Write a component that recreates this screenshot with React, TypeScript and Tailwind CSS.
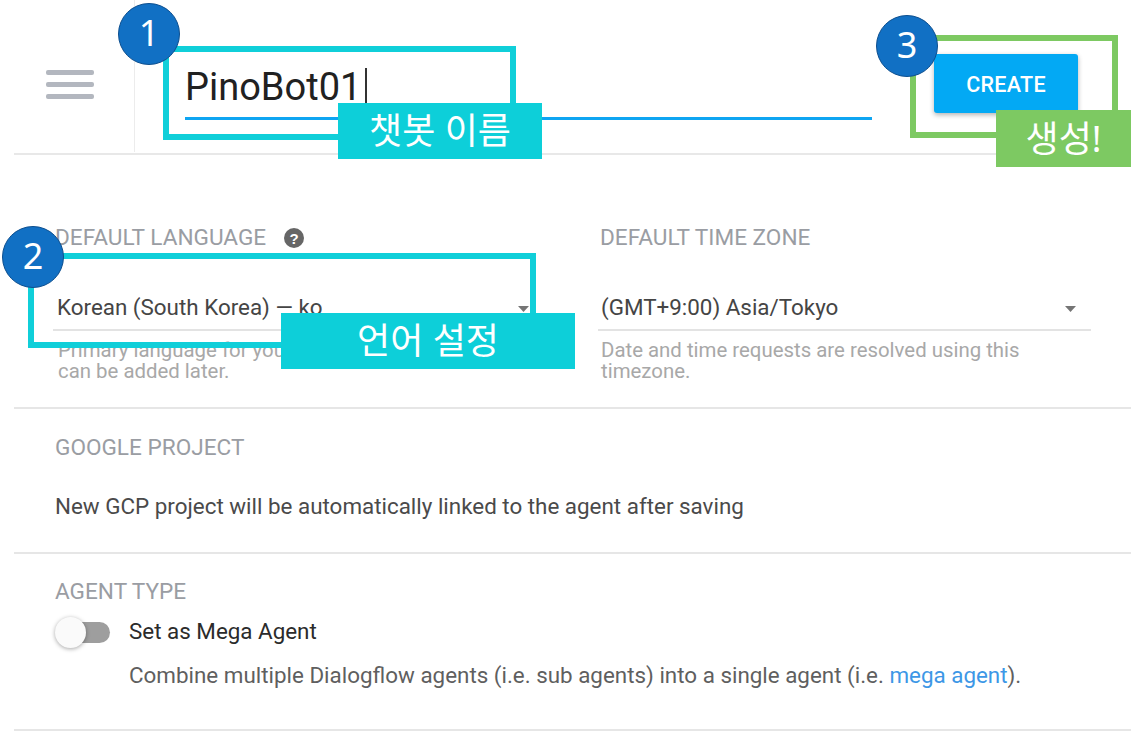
import React from "react";

const KR = { fontFamily: '"Noto Sans", "Noto Sans CJK KR", sans-serif' };

function Circle({ n, className }: { n: string; className: string }) {
  return (
    <div
      className={`absolute w-[62px] h-[62px] rounded-full bg-[#1170c4] border-[1.5px] border-[#0d4f8f] flex items-center justify-center text-white text-[36px] leading-none z-30 ${className}`}
      style={KR}
    >
      <span className="-mt-[3px]">{n}</span>
    </div>
  );
}

function Arrow({ className }: { className: string }) {
  return (
    <svg className={`absolute ${className}`} width="11" height="6" viewBox="0 0 11 6">
      <path d="M0 0 L11 0 L5.5 6 Z" fill="#757575" />
    </svg>
  );
}

export default function App() {
  return (
    <div
      className="relative w-[1131px] h-[738px] overflow-hidden bg-white"
      style={{ fontFamily: 'Roboto, "Liberation Sans", sans-serif' }}
    >
      {/* Header */}
      <div className="flex h-[153px]">
        <div className="w-[135px] h-[152px] border-r-[1.5px] border-[#ececec] pl-[46px] pt-[70px] flex flex-col gap-[7px]">
          <div className="w-[48px] h-[5px] rounded-[2px] bg-[#b3b7bf]" />
          <div className="w-[48px] h-[5px] rounded-[2px] bg-[#b3b7bf]" />
          <div className="w-[48px] h-[5px] rounded-[2px] bg-[#b3b7bf]" />
        </div>
        <div className="ml-[50px] w-[687px] pt-[65px]">
          <div className="h-[44px] flex items-center text-[38px] text-[#212121] leading-[44px]">
            <span>PinoBot01</span>
            <span className="ml-[4px] w-[2px] h-[39px] bg-[#333]" />
          </div>
          <div className="mt-[8px] h-[3px] bg-[#0ea5f2]" />
        </div>
        <div className="ml-[62px] mt-[54px]">
          <div className="w-[144px] h-[59px] pt-[3px] rounded-[3px] bg-[#03a9f4] shadow-[0_2px_5px_rgba(0,0,0,0.3)] flex items-center justify-center text-white text-[21.5px] font-medium tracking-[0.3px]">
            CREATE
          </div>
        </div>
      </div>
      <div className="ml-[14px] h-[2px] bg-[#e8e8e8]" />

      {/* Language / timezone */}
      <div className="ml-[14px] border-b-2 border-[#e6e6e6] pl-[39px] pt-[71px] pb-[25px] flex gap-[53px]">
        <div className="w-[492px]">
          <div className="h-[24px] flex items-center pl-[2px] text-[22.6px] text-[#9a9da3] whitespace-nowrap">
            DEFAULT LANGUAGE
            <svg className="ml-[18px]" width="20" height="20" viewBox="0 0 20 20">
              <circle cx="10" cy="10" r="10" fill="#666" />
              <text x="10" y="15.5" textAnchor="middle" fontSize="15" fontWeight="bold" fill="white" fontFamily="'Liberation Sans', sans-serif">?</text>
            </svg>
          </div>
          <div className="relative mt-[36px] h-[45px] flex items-center pl-[4px] border-b-2 border-[#e3e3e3] text-[22.4px] text-[#454545] whitespace-nowrap">
            Korean (South Korea) — ko
            <Arrow className="right-[16px] top-[20px]" />
          </div>
          <div className="mt-[9px] pl-[5px] text-[20.4px] leading-[21px] text-[#a8a8a8] whitespace-nowrap">
            Primary language for your agent. Other languages
            <br />
            can be added later.
          </div>
        </div>
        <div className="w-[493px]">
          <div className="h-[24px] flex items-center pl-[2px] text-[22.6px] text-[#9a9da3] whitespace-nowrap">DEFAULT TIME ZONE</div>
          <div className="relative mt-[36px] h-[45px] flex items-center pl-[3px] border-b-2 border-[#e3e3e3] text-[22.4px] text-[#454545] whitespace-nowrap">
            (GMT+9:00) Asia/Tokyo
            <Arrow className="right-[15px] top-[20px]" />
          </div>
          <div className="mt-[9px] pl-[3px] text-[20.4px] leading-[21px] text-[#a8a8a8] whitespace-nowrap">
            Date and time requests are resolved using this
            <br />
            timezone.
          </div>
        </div>
      </div>

      {/* Google project */}
      <div className="ml-[14px] border-b-2 border-[#e6e6e6] pl-[41px] pt-[27px] pb-[33px]">
        <div className="h-[24px] flex items-center text-[22.6px] text-[#9a9da3] whitespace-nowrap">GOOGLE PROJECT</div>
        <div className="mt-[35px] h-[24px] flex items-center text-[22.4px] text-[#4a4a4a] whitespace-nowrap">
          New GCP project will be automatically linked to the agent after saving
        </div>
      </div>

      {/* Agent type */}
      <div className="ml-[14px] border-b-2 border-[#e6e6e6] pl-[41px] pt-[26px] pb-[41px]">
        <div className="h-[24px] flex items-center text-[22.6px] text-[#9a9da3] whitespace-nowrap">AGENT TYPE</div>
        <div className="mt-[12px] h-[32px] flex items-center">
          <div className="relative w-[55px] h-[30px]">
            <div className="absolute left-[8px] right-0 top-[5px] h-[21px] rounded-full bg-[#9e9e9e]" />
            <div className="absolute left-0 top-0 w-[31px] h-[31px] rounded-full bg-[#fafafa] shadow-[0_1px_4px_rgba(0,0,0,0.35)]" />
          </div>
          <span className="ml-[19px] text-[22.4px] text-[#2b2b2b] whitespace-nowrap">Set as Mega Agent</span>
        </div>
        <div className="mt-[16px] h-[24px] flex items-center pl-[74px] text-[22.4px] text-[#5f5f5f] whitespace-nowrap">
          Combine multiple Dialogflow agents (i.e. sub agents) into a single agent (i.e.&nbsp;
          <span className="text-[#3d97e6]">mega agent</span>).
        </div>
      </div>

      {/* Annotations */}
      <div className="absolute left-[163px] top-[46px] w-[353px] h-[94px] border-[6px] border-[#10cfd9] z-10" />
      <div
        className="absolute left-[338px] top-[103px] w-[204px] h-[56px] bg-[#0dcfd9] z-20 flex items-center justify-center text-white text-[36px]"
        style={KR}
      >
        챗봇 이름
      </div>
      <Circle n="1" className="left-[118px] top-[3px]" />

      <div className="absolute left-[910px] top-[35px] w-[208px] h-[103px] border-[6px] border-[#7dc962] z-10" />
      <div
        className="absolute left-[996px] top-[110px] w-[135px] h-[57px] bg-[#7dc962] z-20 flex items-center justify-center text-white text-[36px]"
        style={KR}
      >
        생성!
      </div>
      <Circle n="3" className="left-[876px] top-[15px]" />

      <div className="absolute left-[28px] top-[253px] w-[508px] h-[95px] border-[6px] border-[#10cfd9] z-10" />
      <div
        className="absolute left-[281px] top-[313px] w-[294px] h-[56px] bg-[#0dcfd9] z-20 flex items-center justify-center text-white text-[36px]"
        style={KR}
      >
        언어 설정
      </div>
      <Circle n="2" className="left-[2px] top-[226px]" />
    </div>
  );
}
